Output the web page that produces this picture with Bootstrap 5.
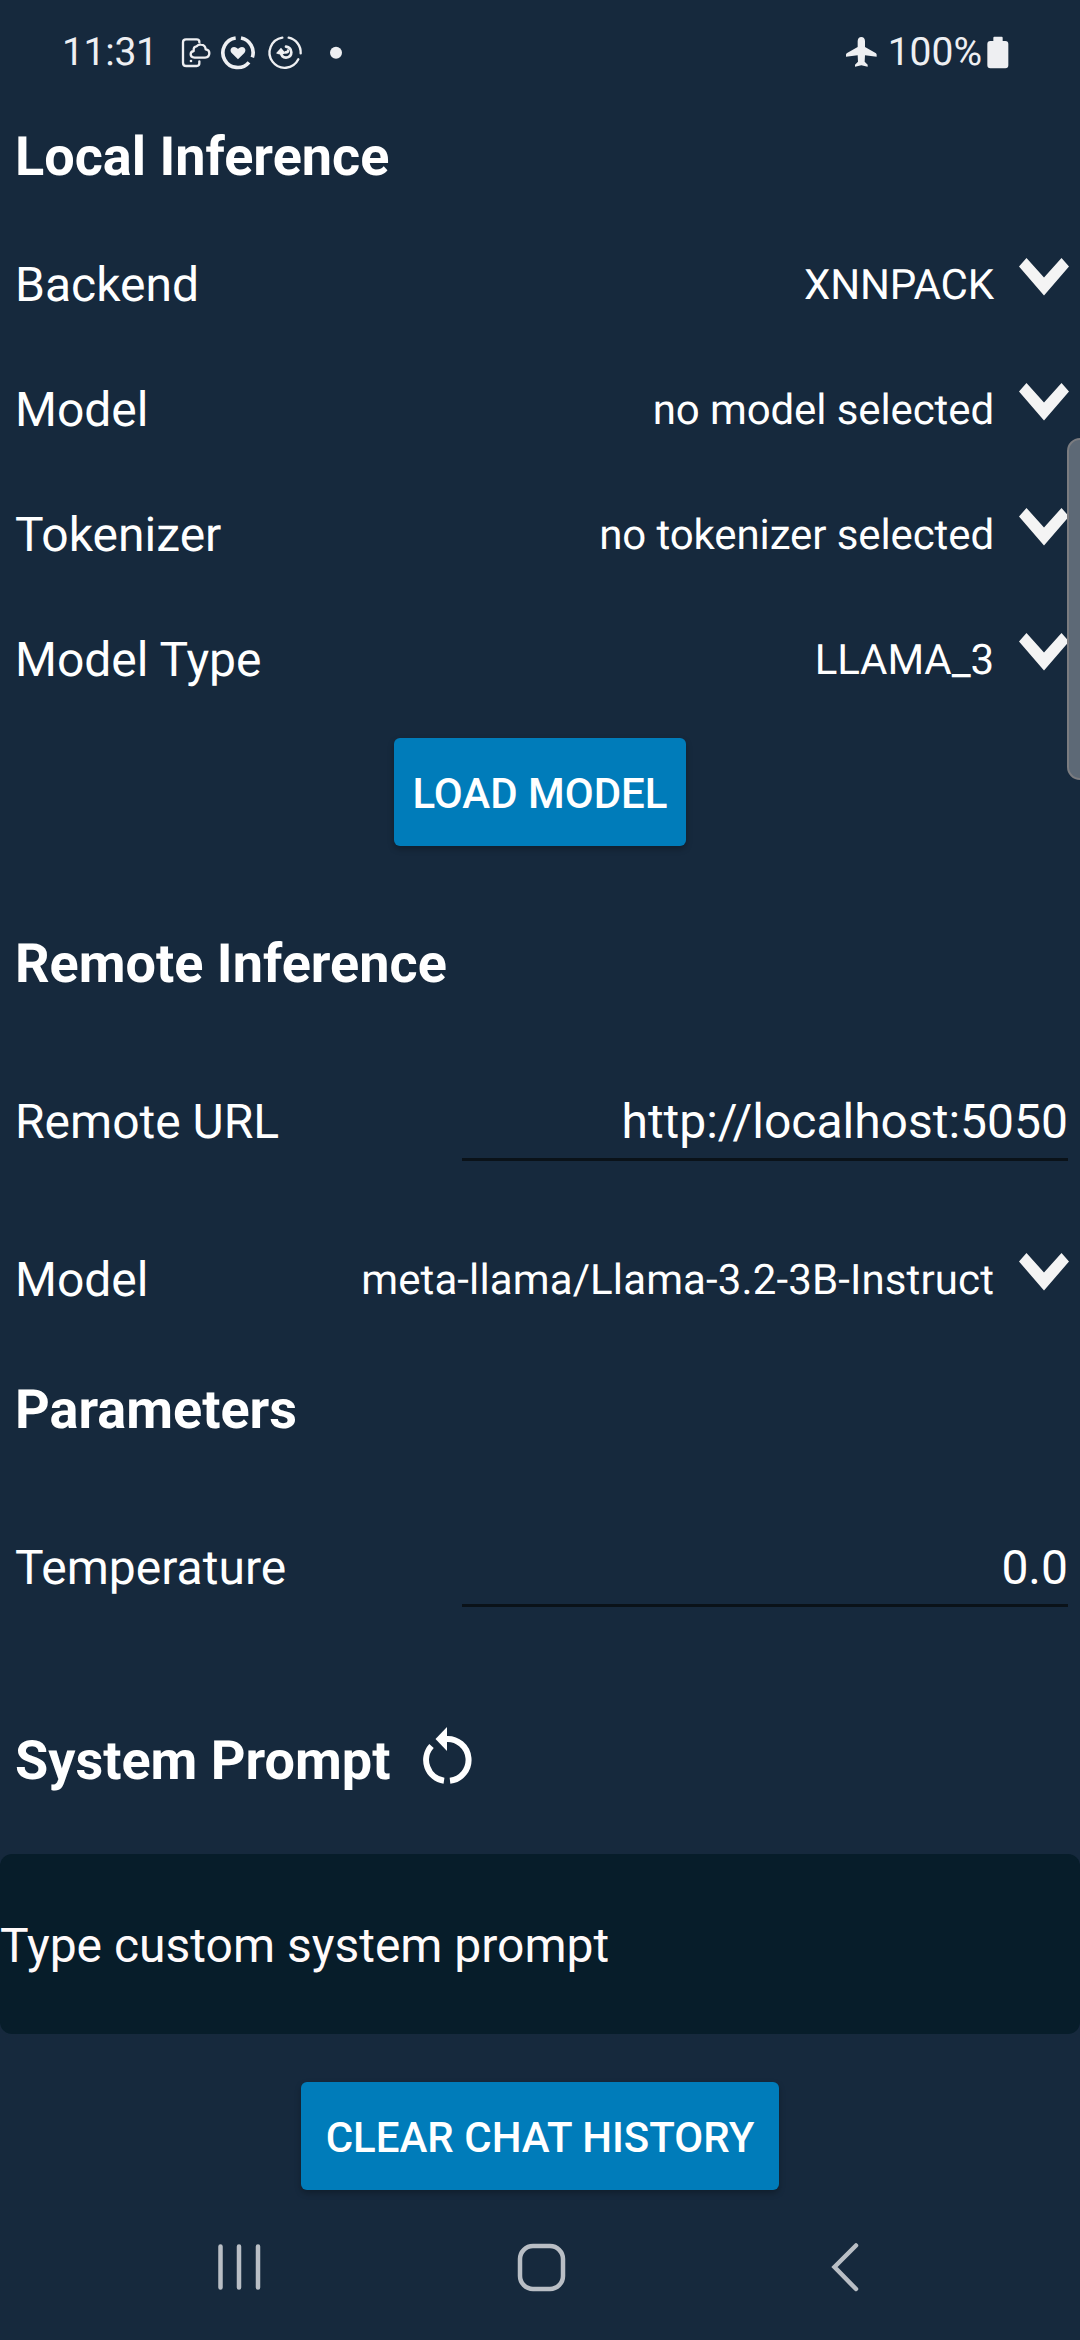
<!DOCTYPE html>
<html lang="en">
<head>
<meta charset="utf-8">
<meta name="viewport" content="width=device-width, initial-scale=1">
<title>Settings</title>
<link href="https://cdn.jsdelivr.net/npm/bootstrap@5.3.0/dist/css/bootstrap.min.css" rel="stylesheet">
<style>
  body { background: #16293d; color: #fff; font-family: Roboto, "Noto Sans", sans-serif; font-size: 48px; line-height: 1.17; min-height: 2340px; overflow: hidden; text-rendering: geometricPrecision; }
  svg { display: block; flex: none; }
  .status-bar { height: 105px; color: #eeeff2; font-size: 39px; padding: 0 71px 0 62px; }
  .status-time { width: 93px; letter-spacing: -.3px; white-space: nowrap; }
  .status-pct { margin: 0 5px 0 11px; }
  .status-glyphs { margin-left: 25px; }
  .section-title { height: 102px; font-size: 54px; font-weight: 700; padding: 3px 0 0 15px; margin: 0; line-height: 1; }
  .section-title svg { margin: -3px 0 0 32px; }
  .setting { height: 125px; padding: 0 11px 0 15px; }
  .setting > span:first-child, .field-row label { padding-top: 2px; }
  .setting-value { font-size: 42px; margin-right: 25px; padding-top: 2px; letter-spacing: -.1px; }
  .remote-model { letter-spacing: .12px; }
  .chevron { margin-bottom: 15px; }
  .field-row { height: 79px; padding: 0 12px 0 15px; }
  .field-row .form-control { width: 606px; height: 79px; padding: 3px 0 0; border: 0; border-bottom: 3px solid #0a1219; border-radius: 0; background: transparent; color: #fff; font-size: 48px; text-align: right; box-shadow: none; }
  .btn-action { --bs-btn-bg: #007cba; --bs-btn-color: #fff; height: 108px; border: 0; border-radius: 6px; padding: 4px 0 0; font-size: 42px; font-weight: 500; line-height: 1; box-shadow: 0 3px 6px rgba(0,0,0,.28); }
  .load-btn { width: 292px; }
  .clear-btn { width: 478px; }
  .prompt-box { height: 180px; border: 0; border-radius: 12px; background: #071d2a; color: #fff; font-size: 48px; padding: 3px 0 0; box-shadow: none; }
  .prompt-box::placeholder { color: #fffafa; opacity: 1; }
  .nav-keys { height: 150px; padding: 4px 220px 0 217px; }
  .home-key { margin-right: 10px; }
  .scroll-thumb { right: -3px; top: 438px; width: 16px; height: 342px; background: #5d6976; border: 2px solid #7b7c80; border-radius: 13px 0 0 13px; }
</style>
</head>
<body>
<header class="status-bar d-flex align-items-center justify-content-between">
  <div class="d-flex align-items-center">
    <span class="status-time">11:31</span>
    <div class="status-glyphs d-flex align-items-center">
      <svg width="32" height="36" viewBox="420 44 96 108" fill="none" stroke="#eeeff2" stroke-width="7" stroke-linecap="round" stroke-linejoin="round"><path d="M478 66v-2q0-7-8-7h-32q-9 0-9 9v61q0 10 10 10h31q8 0 8-8v-6"/><path d="M464 112q-12-1-12-10 0-8 9-10-1-14 9-14 5-6 13-5 13 1 14 14 11 1 11 11 0 13-13 14z"/><circle cx="453" cy="122" r="4" fill="#eeeff2" stroke="none"/></svg>
      <svg class="ms-2" width="36" height="36" viewBox="542 44 108 108"><g fill="none" stroke="#eeeff2" stroke-width="11"><path d="M589 53a44.500 44.500 0 1 0 40 73"/><path d="M605 53a44.500 44.500 0 0 1 34 58"/></g><path fill="#eeeff2" d="M596 117l-19-19c-7-8-2-18 7-18 6 0 9 3 12 6 3-3 6-6 12-6 9 0 14 10 7 18z"/></svg>
      <svg class="ms-2" width="40" height="36" viewBox="672 44 120 108"><g fill="none" stroke="#eeeff2" stroke-width="7" stroke-linecap="round"><path d="M727 52a45.500 45.500 0 1 0 48 65"/><path d="M746 52a45.500 45.500 0 0 1 36 47"/><path stroke-width="8" d="M723 97q1 14 15 15 16-1 16-16-1-15-16-17"/><path stroke-width="8" d="M737 96q7 0 7-5"/></g><path fill="#eeeff2" d="M708 99l15-17 14 17q-7 4-14 3-8 1-15-3z"/></svg>
      <svg width="48" height="36" viewBox="792 44 144 108"><circle cx="888" cy="97" r="18" fill="#eeeff2"/></svg>
    </div>
  </div>
  <div class="d-flex align-items-center">
    <svg width="32" height="34" viewBox="70 48 96 102" fill="#eeeff2"><path d="M108 63q1-12 11-12t11 12v18l33 19q3 3 2 10l-35-4-1 19 9 9v6l-19-4-19 4v-6l9-9-1-19-35 4q-1-7 2-10l33-19z"/></svg>
    <span class="status-pct">100%</span>
    <svg width="22" height="34" viewBox="500 46 66 102" fill="#eeeff2"><path d="M519 51q0-3 3-3h22q3 0 3 3v10h8q9 0 9 9v64q0 9-9 9h-45q-9 0-9-9V70q0-9 9-9h9z"/></svg>
  </div>
</header>

<main class="d-flex flex-column">
  <h1 class="section-title d-flex align-items-center">Local Inference</h1>
  <section style="margin-top:15px">
    <div class="setting d-flex align-items-center"><span>Backend</span><span class="setting-value ms-auto">XNNPACK</span><svg class="chevron" width="50" height="38" viewBox="0 0 50 38"><path fill="#f4f4f4" d="M0 8.500 7.500 0 25 19.500 42.500 0 50 8.500 25 37.500z"/></svg></div>
    <div class="setting d-flex align-items-center"><span>Model</span><span class="setting-value ms-auto">no model selected</span><svg class="chevron" width="50" height="38" viewBox="0 0 50 38"><path fill="#f4f4f4" d="M0 8.500 7.500 0 25 19.500 42.500 0 50 8.500 25 37.500z"/></svg></div>
    <div class="setting d-flex align-items-center"><span>Tokenizer</span><span class="setting-value ms-auto">no tokenizer selected</span><svg class="chevron" width="50" height="38" viewBox="0 0 50 38"><path fill="#f4f4f4" d="M0 8.500 7.500 0 25 19.500 42.500 0 50 8.500 25 37.500z"/></svg></div>
    <div class="setting d-flex align-items-center"><span>Model Type</span><span class="setting-value ms-auto">LLAMA_3</span><svg class="chevron" width="50" height="38" viewBox="0 0 50 38"><path fill="#f4f4f4" d="M0 8.500 7.500 0 25 19.500 42.500 0 50 8.500 25 37.500z"/></svg></div>
  </section>
  <button class="btn btn-action load-btn align-self-center mt-3" type="button">LOAD MODEL</button>

  <h2 class="section-title d-flex align-items-center" style="margin-top:66px">Remote Inference</h2>
  <div class="field-row d-flex align-items-center justify-content-between" style="margin-top:68px"><label for="url">Remote URL</label><input id="url" class="form-control" value="http://localhost:5050"></div>
  <div class="setting d-flex align-items-center" style="margin-top:56px"><span>Model</span><span class="setting-value remote-model ms-auto">meta-llama/Llama-3.2-3B-Instruct</span><svg class="chevron" width="50" height="38" viewBox="0 0 50 38"><path fill="#f4f4f4" d="M0 8.500 7.500 0 25 19.500 42.500 0 50 8.500 25 37.500z"/></svg></div>

  <h2 class="section-title d-flex align-items-center mt-3">Parameters</h2>
  <div class="field-row d-flex align-items-center justify-content-between" style="margin-top:68px"><label for="temp">Temperature</label><input id="temp" class="form-control" value="0.0"></div>

  <h2 class="section-title d-flex align-items-center" style="margin-top:102px"><span>System Prompt</span>
    <svg width="50" height="66" viewBox="423 1727 50 66"><g fill="none" stroke="#fff" stroke-width="6"><path d="M447 1739a21 21 0 0 1 4 41.800"/><path d="M445 1780.800a21 21 0 0 1-12.500-34.800"/></g><path fill="#fff" d="M436.500 1739 448 1727v24z"/></svg>
  </h2>
  <input class="form-control prompt-box" style="margin-top:43px" placeholder="Type custom system prompt">
  <button class="btn btn-action clear-btn align-self-center mt-5" type="button">CLEAR CHAT HISTORY</button>
</main>

<nav class="nav-keys d-flex align-items-center justify-content-between">
  <svg width="44" height="50" viewBox="0 0 44 50" fill="none" stroke="#b9bec5" stroke-width="4.500" stroke-linecap="round"><path d="M3.500 4.500v41M22 4.500v41M41 4.500v41"/></svg>
  <svg class="home-key" width="50" height="50" viewBox="0 0 50 50" fill="none" stroke="#b9bec5" stroke-width="4.500"><rect x="4" y="4" width="43" height="43" rx="13"/></svg>
  <svg width="30" height="50" viewBox="0 0 30 50" fill="none" stroke="#b9bec5" stroke-width="4.500" stroke-linecap="round"><path d="M26 3.500 4.500 25 26 47"/></svg>
</nav>
<div class="scroll-thumb position-absolute"></div>
<script src="https://cdn.jsdelivr.net/npm/bootstrap@5.3.0/dist/js/bootstrap.bundle.min.js"></script>
</body>
</html>
